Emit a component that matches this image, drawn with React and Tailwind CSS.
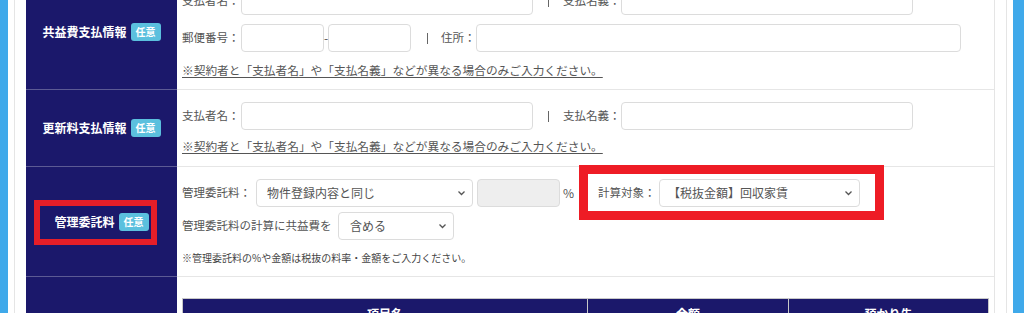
const NAVY = 'bg-[#1b186b]'

function Badge() {
  return (
    <span className="ml-[4px] rounded-[3px] bg-[#5bc0de] px-[5px] py-[1px] text-[10px] font-bold leading-4 text-white">
      任意
    </span>
  )
}

function Label({ children, marked = false }) {
  return (
    <div className={`relative flex w-[151px] shrink-0 items-center justify-center ${NAVY}`}>
      <span className="whitespace-nowrap text-[12px] font-bold text-white">{children}</span>
      <Badge />
      {marked && (
        <span className="pointer-events-none absolute left-[8px] top-[33px] h-[45px] w-[123px] border-[6px] border-[#e61e28]" />
      )}
    </div>
  )
}

function TextBox({ width, disabled = false }) {
  return (
    <div
      className={`h-[28px] shrink-0 rounded-[4px] border border-[#dcdcdc] ${
        disabled ? 'bg-[#eeeeee]' : 'bg-white'
      } ${width}`}
    />
  )
}

function Chevron() {
  return (
    <svg width="9" height="6" viewBox="0 0 9 6" className="shrink-0">
      <path d="M1.5 1.5 L4.5 4.5 L7.5 1.5" fill="none" stroke="#555" strokeWidth="1.3" />
    </svg>
  )
}

function SelectBox({ width, value, indent = 'pl-[10px]' }) {
  return (
    <div
      className={`flex h-[28px] shrink-0 items-center justify-between rounded-[4px] border border-[#dcdcdc] bg-white pr-[6px] text-[12px] text-[#555] ${indent} ${width}`}
    >
      <span className="whitespace-nowrap">{value}</span>
      <Chevron />
    </div>
  )
}

// 区切りの縦棒
function Sep({ className = '' }) {
  return <span className={`h-[11px] w-px shrink-0 bg-[#666] ${className}`} />
}

function FieldName({ width, children }) {
  return (
    <span className={`shrink-0 whitespace-nowrap text-[11.5px] text-[#555] ${width}`}>
      {children}
    </span>
  )
}

function Note({ children }) {
  return (
    <p className="whitespace-nowrap text-[11.7px] leading-4 text-[#555] underline underline-offset-2">
      {children}
    </p>
  )
}

const noteText =
  '※契約者と「支払者名」や「支払名義」などが異なる場合のみご入力ください。'

function PayerLine() {
  return (
    <div className="flex h-[28px] items-center">
      <FieldName width="w-[59px]">支払者名：</FieldName>
      <TextBox width="w-[292px]" />
      <Sep className="ml-[15px]" />
      <FieldName width="ml-[14px] w-[58px]">支払名義：</FieldName>
      <TextBox width="w-[292px]" />
    </div>
  )
}

export default function App() {
  return (
    <div className="flex h-[313px] w-[1024px] overflow-hidden bg-white font-['Noto_Sans_CJK_JP',sans-serif]">
      <div className="w-[8px] shrink-0 bg-[#3fa9ea]" />
      <div className="ml-[6px] w-[993px] shrink-0 border-x border-[#e5e5e5] pl-[11px] pr-[11px]">
        <div className="-mt-[25px] border-r border-[#e5e5e5]">
          {/* 共益費支払情報 */}
          <div className="flex border-b border-[#e6e6e6]">
            <Label>共益費支払情報</Label>
            <div className="flex-1 pb-[11px] pl-[5px] pt-[12px]">
              <PayerLine />
              <div className="mt-[9px] flex h-[28px] items-center">
                <FieldName width="w-[59px]">郵便番号：</FieldName>
                <TextBox width="w-[83px]" />
                <span className="w-[4px] text-[12px] text-[#555]">-</span>
                <TextBox width="w-[83px]" />
                <Sep className="ml-[16px]" />
                <FieldName width="ml-[13px] w-[35px]">住所：</FieldName>
                <TextBox width="w-[485px]" />
              </div>
              <div className="mt-[10px]">
                <Note>{noteText}</Note>
              </div>
            </div>
          </div>
          <div className="relative -mt-px h-px w-[151px] bg-[#5c5a94]" />

          {/* 更新料支払情報 */}
          <div className="flex border-b border-[#e6e6e6]">
            <Label>更新料支払情報</Label>
            <div className="flex-1 pb-[12px] pl-[5px] pt-[12px]">
              <PayerLine />
              <div className="mt-[8px]">
                <Note>{noteText}</Note>
              </div>
            </div>
          </div>
          <div className="relative -mt-px h-px w-[151px] bg-[#5c5a94]" />

          {/* 管理委託料 */}
          <div className="flex border-b border-[#e6e6e6]">
            <Label marked>管理委託料</Label>
            <div className="flex-1 pb-[10px] pl-[5px] pt-[12px]">
              <div className="flex h-[28px] items-center">
                <FieldName width="w-[74px]">管理委託料：</FieldName>
                <SelectBox width="w-[217px]" value="物件登録内容と同じ" />
                <div className="ml-[4px]">
                  <TextBox width="w-[83px]" disabled />
                </div>
                <span className="ml-[3px] w-[10px] text-[12px] text-[#555]">%</span>
                <div className="relative ml-[25px] flex items-center">
                  <FieldName width="w-[61px]">計算対象：</FieldName>
                  <SelectBox width="w-[201px]" value="【税抜金額】回収家賃" indent="pl-[8px]" />
                  <span className="pointer-events-none absolute -bottom-[13px] -left-[19px] -right-[24px] -top-[14px] border-[9px] border-[#ee1c25]" />
                </div>
              </div>
              <div className="mt-[5px] flex h-[28px] items-center">
                <FieldName width="w-[156px]">管理委託料の計算に共益費を</FieldName>
                <SelectBox width="w-[116px]" value="含める" indent="pl-[11px]" />
              </div>
              <p className="mt-[10px] whitespace-nowrap text-[10px] leading-4 text-[#444]">
                ※管理委託料の%や金額は税抜の料率・金額をご入力ください。
              </p>
            </div>
          </div>
          <div className="relative -mt-px h-px w-[151px] bg-[#5c5a94]" />

          {/* 内訳 */}
          <div className="flex">
            <div className={`w-[151px] shrink-0 ${NAVY}`} />
            <div className="flex-1 pl-[5px] pr-[5px] pt-[21px]">
              <div className={`grid h-[32px] grid-cols-[405px_201px_1fr] border border-[#c8c8c8] ${NAVY}`}>
                <div className="flex items-center justify-center border-r border-[#c8c8c8] text-[12px] font-bold text-white">項目名</div>
                <div className="flex items-center justify-center border-r border-[#c8c8c8] text-[12px] font-bold text-white">金額</div>
                <div className="flex items-center justify-center text-[12px] font-bold text-white">預かり先</div>
              </div>
            </div>
          </div>
        </div>
      </div>
      <div className="w-[6px] shrink-0" />
      <div className="flex-1 bg-[#3fa9ea]" />
    </div>
  )
}
